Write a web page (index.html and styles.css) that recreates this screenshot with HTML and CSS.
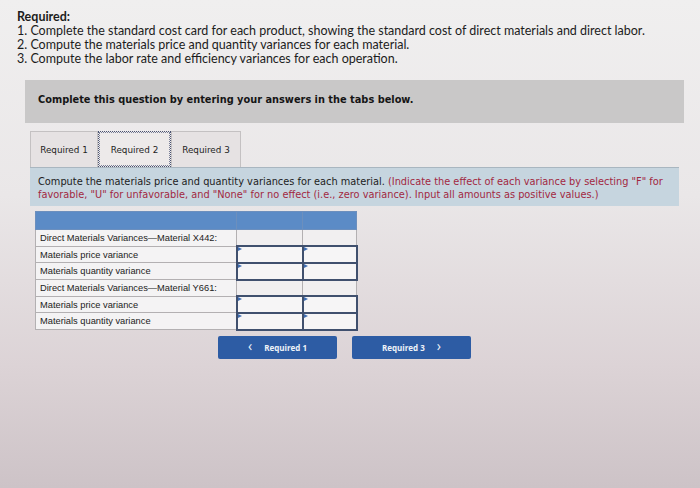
FILE: index.html
```html
<!DOCTYPE html>
<html>
<head>
<meta charset="utf-8">
<link rel="stylesheet" href="styles.css">
</head>
<body>
<div class="page">
  <div class="required">
    <div class="req-title">Required:</div>
    <div class="req-line">1. Complete the standard cost card for each product, showing the standard cost of direct materials and direct labor.</div>
    <div class="req-line">2. Compute the materials price and quantity variances for each material.</div>
    <div class="req-line">3. Compute the labor rate and efficiency variances for each operation.</div>
  </div>

  <div class="banner">Complete this question by entering your answers in the tabs below.</div>

  <div class="tabs">
    <div class="tab">Required 1</div>
    <div class="tab active">Required 2</div>
    <div class="tab">Required 3</div>
  </div>

  <div class="instruction">
    <div class="ins-line">Compute the materials price and quantity variances for each material. <span class="red">(Indicate the effect of each variance by selecting "F" for</span></div>
    <div class="ins-line red">favorable, "U" for unfavorable, and "None" for no effect (i.e., zero variance). Input all amounts as positive values.)</div>
  </div>

  <table class="grid">
    <tr class="head"><th></th><th></th><th></th></tr>
    <tr><td class="label">Direct Materials Variances—Material X442:</td><td class="blank"></td><td class="blank"></td></tr>
    <tr><td class="label">Materials price variance</td><td class="input"></td><td class="input"></td></tr>
    <tr><td class="label">Materials quantity variance</td><td class="input"></td><td class="input"></td></tr>
    <tr><td class="label">Direct Materials Variances—Material Y661:</td><td class="blank"></td><td class="blank"></td></tr>
    <tr><td class="label">Materials price variance</td><td class="input"></td><td class="input"></td></tr>
    <tr><td class="label">Materials quantity variance</td><td class="input"></td><td class="input"></td></tr>
  </table>

  <div class="nav">
    <div class="btn"><span class="chev">&lsaquo;</span>Required 1</div>
    <div class="btn">Required 3<span class="chev right">&rsaquo;</span></div>
  </div>
</div>
</body>
</html>
```

FILE: styles.css
```css
html, body {
  margin: 0;
  padding: 0;
}
body {
  width: 700px;
  height: 488px;
  overflow: hidden;
  background: linear-gradient(180deg, #f0efef 0%, #eae7e8 40%, #dcd3d6 75%, #cdc3c7 100%);
}
.page {
  padding: 10px 0 0 17px;
}
.required {
  font-family: Lato, "Liberation Sans", sans-serif;
  font-size: 12.5px;
  line-height: 14px;
  color: #1c1c1c;
}
.req-title {
  font-weight: bold;
}
.banner {
  margin: 14px 0 0 8px;
  width: 659px;
  height: 43px;
  box-sizing: border-box;
  padding: 14px 0 0 13px;
  background: #c9c8c8;
  font-family: "DejaVu Sans", sans-serif;
  font-weight: bold;
  font-size: 9.8px;
  color: #151515;
}
.tabs {
  display: flex;
  margin: 8px 0 0 13px;
  height: 36px;
}
.tab {
  box-sizing: border-box;
  height: 36px;
  padding-top: 13px;
  text-align: center;
  font-family: "DejaVu Sans", sans-serif;
  font-size: 8.8px;
  color: #1e1e1e;
  background: #e6e2e3;
  border: 1px solid #c4c1c2;
  border-bottom: none;
}
.tab:nth-child(1) { width: 68px; }
.tab:nth-child(2) { width: 73px; }
.tab:nth-child(3) { width: 70px; }
.tab.active {
  background: #edeaea;
  border: 1px dotted #4a5270;
  outline: 1px dotted #7a8098;
  outline-offset: -2px;
}
.instruction {
  margin-left: 13px;
  width: 649px;
  height: 39px;
  box-sizing: border-box;
  padding: 7px 0 0 8px;
  background: #c6d5df;
  border-top: 1px solid #a9b6c0;
  font-family: "DejaVu Sans", sans-serif;
  font-size: 9.8px;
  line-height: 13px;
  color: #1c1c1c;
}
.ins-line {
  white-space: nowrap;
}
.red {
  color: #a2283f;
}
.grid {
  margin: 5px 0 0 18px;
  border-collapse: collapse;
  font-family: "Liberation Sans", Arial, sans-serif;
  font-size: 9.3px;
  color: #222;
}
.grid tr.head th {
  height: 17px;
  padding: 0;
  background: #5b8bc6;
  border: 1px solid #6c8fbd;
}
.grid th:nth-child(1), .grid td:nth-child(1) { width: 200px; }
.grid th:nth-child(2), .grid td:nth-child(2) { width: 65px; }
.grid th:nth-child(3), .grid td:nth-child(3) { width: 53px; }
.grid td {
  height: 16.7px;
  padding: 0 0 0 4px;
  box-sizing: border-box;
  background: #f4f3f4;
  border: 1px solid #b3b0b2;
  white-space: nowrap;
}
.grid td.blank {
  background: #f1eff0;
}
.grid td.input {
  position: relative;
  background: #f6f5f6;
  border: 2px solid #40506e;
}
.grid td.input::before {
  content: "";
  position: absolute;
  left: 0;
  top: 0;
  border-left: 4px solid #3f6db1;
  border-top: 2px solid transparent;
  border-bottom: 2px solid transparent;
}
.nav {
  display: flex;
  gap: 15px;
  margin: 5px 0 0 201px;
}
.btn {
  width: 119px;
  height: 23px;
  box-sizing: border-box;
  display: flex;
  align-items: center;
  justify-content: center;
  background: #2d5ca4;
  border-radius: 2px;
  color: #eef2f8;
  font-family: "Open Sans", "DejaVu Sans", sans-serif;
  font-weight: bold;
  font-size: 8px;
}
.chev {
  font-size: 14px;
  font-weight: normal;
  margin-right: 12px;
  line-height: 1;
  margin-top: -2px;
}
.chev.right {
  margin-right: 0;
  margin-left: 12px;
}
```
